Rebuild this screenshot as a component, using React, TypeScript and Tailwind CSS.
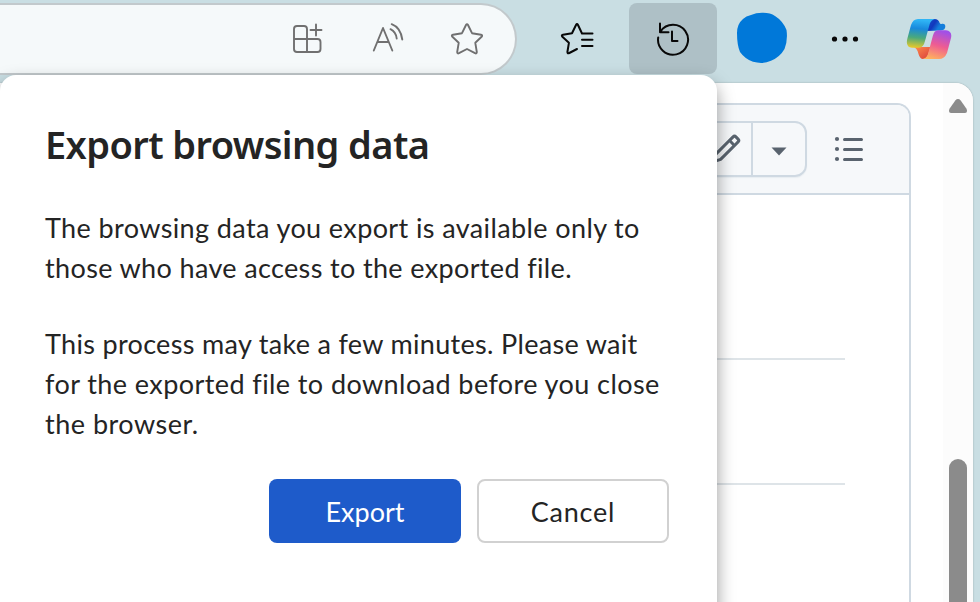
import React from "react";

function AddressBar() {
  return (
    <div className="flex h-[72px] w-[517px] shrink-0 items-start justify-end rounded-r-full border-2 border-l-0 border-[#c2c9cc] bg-[#f5f9fa] pr-[30px] pt-[17px]">
      <svg className="mr-[46px]" width="34" height="34" viewBox="291 22 34 34" fill="none" stroke="#707070" strokeWidth="1.9" strokeLinecap="round">
        <path d="M307 39V29Q307 26 304 26H297Q294 26 294 29V49Q294 52 297 52H317.500Q320.500 52 320.500 49V42Q320.500 39 317.500 39H294M307 39V52" />
        <path d="M316 24.500V35.500M310.500 30H321.500" />
      </svg>
      <svg className="mr-[44px]" width="34" height="34" viewBox="371 22 34 34" fill="none" stroke="#707070" strokeWidth="1.900" strokeLinecap="round" strokeLinejoin="round">
        <path d="M373.800 50.500L383 28L392.300 50.500M377.300 42H388.700" />
        <path d="M390.500 29.200Q396 32 396.700 38.500M391.700 24.200Q400.500 27.500 402.300 39.500" />
      </svg>
      <svg width="36" height="36" viewBox="449 22 36 36" fill="none" stroke="#707070" strokeWidth="1.900" strokeLinejoin="round">
        <path d="M466 25Q467 23.200 468 25L472 33.200L481 34.700Q483 35.200 481.600 36.800L475.300 42.800L476.800 52Q476.800 54 475 53.200L467 49L459 53.200Q457.200 54 457.200 52L458.700 42.800L452.400 36.800Q451 35.200 453 34.700L462 33.200Z" />
      </svg>
    </div>
  );
}

function Toolbar() {
  return (
    <header className="flex h-[83px] items-start pt-[3px]">
      <AddressBar />
      <svg className="ml-[43px] mt-[18px] shrink-0" width="36" height="36" viewBox="560 21 36 36" fill="none" stroke="#080808" strokeWidth="2" strokeLinecap="round" strokeLinejoin="round">
        <path d="M577 49L569.300 53Q567.400 54 567.400 52L568.900 42.800L562.400 36.800Q561 35.200 563 34.700L572 33.200L576 25Q577 23.200 578 25L582 33.500H592.500M582 39.800H592.500M582 46H592.500" />
      </svg>
      <div className="ml-[33px] flex h-[71px] w-[88px] shrink-0 items-center justify-center rounded-[8px] bg-[#aec0c6]">
        <svg width="36" height="36" viewBox="655 21 36 36" fill="none" stroke="#080808" strokeWidth="2" strokeLinecap="round" strokeLinejoin="round">
          <path d="M658.200 37.500A15 15 0 1 0 660.500 31.500M660 23.500V32.200H668.500M672 31.500V41H677.500" />
        </svg>
      </div>
      <svg className="ml-[19px] mt-[8px] shrink-0" width="52" height="54" viewBox="736 11 52 54">
        <path d="M751 15Q756 12.700 762 12.700Q770 12.400 775 16Q783 21 786.500 30Q788 40 784.500 49Q780 57 771 60.800Q763 64.500 753 61.800Q745 59 740 52Q737 45 737 33Q737 24 743 19Q746 16 751 15Z" fill="#0078d9" />
      </svg>
      <svg className="ml-[42px] mt-[32px] shrink-0" width="30" height="8" viewBox="830 35 30 8" fill="#080808">
        <circle cx="834.500" cy="39" r="2.600" />
        <circle cx="845" cy="39" r="2.600" />
        <circle cx="855.500" cy="39" r="2.600" />
      </svg>
      <svg className="ml-[46px] mt-[15px] shrink-0" width="46" height="42" viewBox="906 18 46 42">
        <defs>
          <linearGradient id="cool" x1="0.100" y1="0" x2="0" y2="1">
            <stop stopColor="#2fb4f5" />
            <stop offset="0.300" stopColor="#1889dc" />
            <stop offset="0.620" stopColor="#4aa97c" />
            <stop offset="1" stopColor="#f5cc24" />
          </linearGradient>
          <linearGradient id="warm" x1="0.600" y1="0" x2="0.300" y2="1">
            <stop stopColor="#a050e8" />
            <stop offset="0.500" stopColor="#ee5c92" />
            <stop offset="1" stopColor="#ffb35d" />
          </linearGradient>
          <linearGradient id="navy" x1="0" y1="0" x2="1" y2="0.400">
            <stop stopColor="#1450cc" />
            <stop offset="0.500" stopColor="#1238bd" />
            <stop offset="0.800" stopColor="#147edb" />
          </linearGradient>
          <linearGradient id="ember" x1="0" y1="0" x2="1" y2="1">
            <stop stopColor="#ff8d4e" />
            <stop offset="1" stopColor="#d93d3b" />
          </linearGradient>
        </defs>
        <path d="M926 31L928 23L932 19H934.500Q938.500 19 939.700 23Q940.300 24.500 942 23.800Q945.500 23.300 945.300 27Q945 30 941 30.500Z" fill="url(#navy)" />
        <path d="M914 47H930.500L928 55Q926 59 923 59Q920 59 918.500 54Q917.500 49 914 47Z" fill="url(#ember)" />
        <path d="M918 19H935Q931 20 929.700 24L925 41Q923.500 47.500 919 47.700H912Q905 47 907.500 38L911 25Q913 19 918 19Z" fill="url(#cool)" />
        <path d="M938 30.200H946Q952.500 31 951 38L947 53Q944.500 59 939 59H922.500Q926.500 58.500 928 54L932.800 36Q934 30.500 938 30.200Z" fill="url(#warm)" />
      </svg>
    </header>
  );
}

function FilePanel() {
  return (
    <div className="mt-[20px] h-[600px] w-[911px] shrink-0 rounded-tr-[14px] border-r-2 border-t-2 border-[#cfd9e2] bg-white">
      <div className="flex h-[90px] items-start justify-end rounded-tr-[12px] border-b-2 border-[#cfd9e2] bg-[#f6f8fa] pt-[16px]">
        <div className="flex h-[56px] overflow-hidden rounded-r-[12px] border-2 border-[#cfd9e2] shadow-[0_1px_1px_#e8edf1]">
          <div className="flex w-[50px] items-center justify-end border-r-2 border-[#cfd9e2] pr-[9px]">
            <svg width="32" height="32" viewBox="0 0 16 16" fill="#59636e">
              <path d="M11.013 1.427a1.750 1.750 0 0 1 2.474 0l1.086 1.086a1.750 1.750 0 0 1 0 2.474l-8.610 8.610c-.21.21-.47.364-.756.445l-3.251.93a.75.75 0 0 1-.927-.928l.929-3.250c.081-.286.235-.547.445-.758l8.610-8.610Zm.176 4.823L9.750 4.810l-6.286 6.287a.253.253 0 0 0-.064.108l-.558 1.953 1.953-.558a.253.253 0 0 0 .108-.064Zm1.238-3.763a.25.25 0 0 0-.354 0L10.811 3.750l1.439 1.440 1.263-1.263a.25.25 0 0 0 0-.354Z" />
            </svg>
          </div>
          <div className="flex w-[52px] items-center justify-center">
            <svg className="mt-[4px]" width="16" height="9" viewBox="0 0 16 9" fill="#59636e"><path d="M0.500 0.500H15.500L8 8.500Z" /></svg>
          </div>
        </div>
        <svg className="ml-[27px] mr-[44px] mt-[14px]" width="31" height="28" viewBox="834 135 31 28" fill="#59636e" stroke="#59636e" strokeLinecap="round">
          <path d="M844.500 139.500H861.500M844.500 149.500H861.500M844.500 159.500H861.500" strokeWidth="3" />
          <g stroke="none">
            <circle cx="837" cy="139" r="2.100" />
            <circle cx="837" cy="149" r="2.100" />
            <circle cx="837" cy="159" r="2.100" />
          </g>
        </svg>
      </div>
      <div className="mr-[64px] h-[165px] border-b-2 border-[#dee4e8]" />
      <div className="mr-[64px] h-[125px] border-b-2 border-[#dee4e8]" />
    </div>
  );
}

function ScrollBar() {
  return (
    <div className="ml-auto flex w-[30px] flex-col items-center bg-[#fcfcfc] pt-[16px]">
      <svg className="shrink-0" width="18" height="14" viewBox="0 0 18 14" fill="#8b8b8b">
        <path d="M6.300 1.400Q9 -1.400 11.700 1.400L17.500 9.800Q19 13.800 16 14H2Q-1 13.800 0.500 9.800Z" />
      </svg>
      <div className="mt-[346px] h-[160px] w-[18px] shrink-0 rounded-t-full bg-[#8b8b8b]" />
    </div>
  );
}

function ExportDialog() {
  return (
    <section className="absolute left-0 top-[75px] h-[540px] w-[717px] rounded-t-[16px] bg-white pl-[45px] pr-[48px] pt-[42px] text-[27px] leading-[40px] text-[#242424] shadow-[0_8px_18px_rgba(0,0,0,0.4)]">
      <h1 className="whitespace-nowrap font-['Noto_Sans',sans-serif] text-[38px] font-semibold leading-[54px] tracking-[-0.6px]">Export browsing data</h1>
      <p className="mt-[37px] whitespace-nowrap">
        <span className="tracking-[0.39px]">The browsing data you export is available only to</span><br />
        <span className="tracking-[0.36px]">those who have access to the exported file.</span>
      </p>
      <p className="mt-[36px] whitespace-nowrap">
        <span className="tracking-[0.32px]">This process may take a few minutes. Please wait</span><br />
        <span className="tracking-[0.42px]">for the exported file to download before you close</span><br />
        <span className="tracking-[0.5px]">the browser.</span>
      </p>
      <div className="mt-[35px] flex justify-end gap-[16px]">
        <button className="h-[64px] w-[192px] rounded-[8px] bg-[#1e5bca] pt-[2px] text-white">Export</button>
        <button className="h-[64px] w-[192px] rounded-[8px] border-2 border-[#d1d1d1] bg-white pt-[2px] tracking-[0.8px]">Cancel</button>
      </div>
    </section>
  );
}

export default function App() {
  return (
    <div className="relative h-[602px] w-[980px] overflow-hidden bg-[#c9dee3] font-[Lato,sans-serif]">
      <Toolbar />
      <main className="flex h-[519px] w-[973px] overflow-hidden rounded-tr-[18px] bg-white shadow-[0_0_2px_rgba(0,0,0,0.25)]">
        <FilePanel />
        <ScrollBar />
      </main>
      <ExportDialog />
    </div>
  );
}
